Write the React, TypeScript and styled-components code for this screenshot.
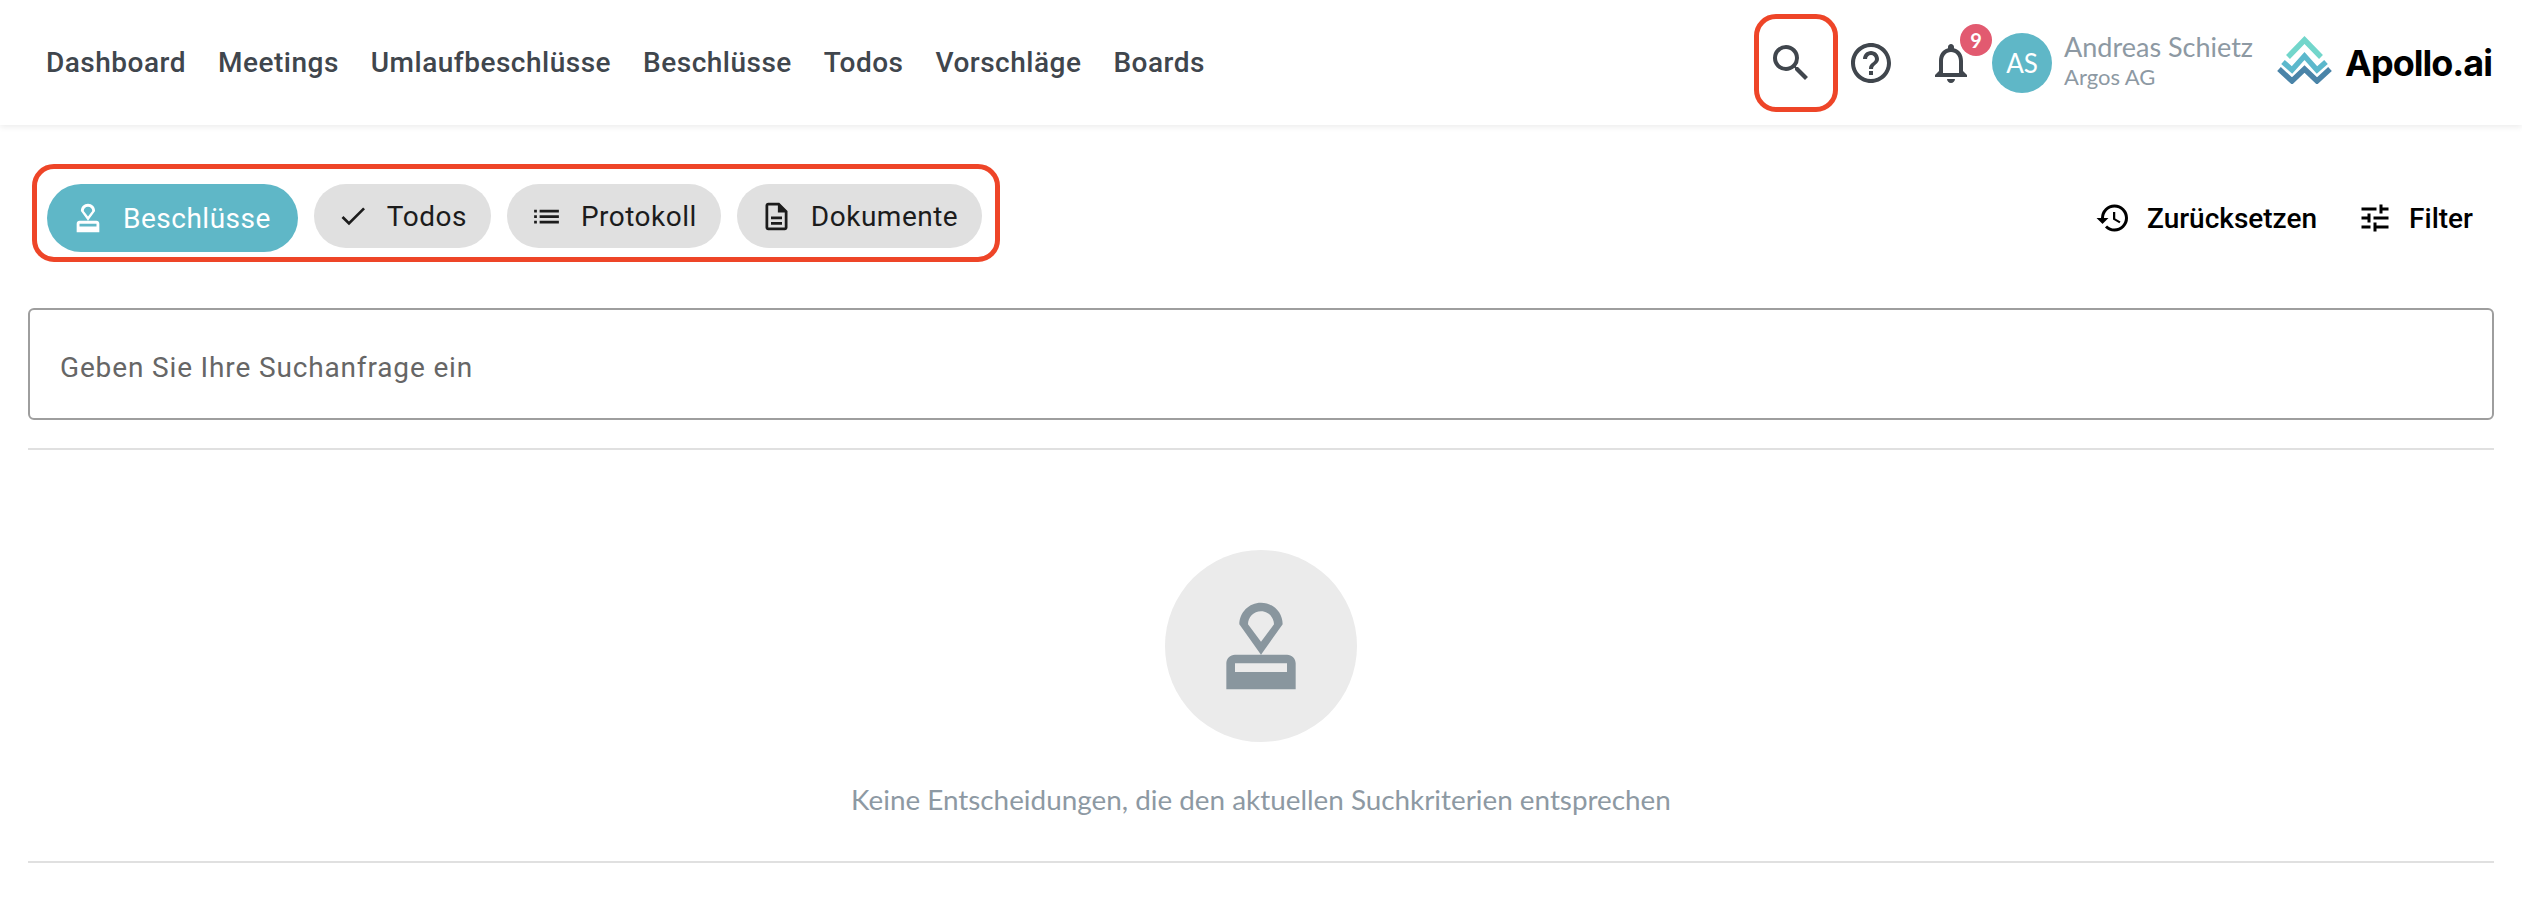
import styled, { createGlobalStyle } from "styled-components";
import {
    MdCheck,
    MdHelpOutline,
    MdHistory,
    MdList,
    MdNotificationsNone,
    MdOutlineDescription,
    MdSearch,
    MdTune,
} from "react-icons/md";

const NAV_ITEMS = ["Dashboard", "Meetings", "Umlaufbeschlüsse", "Beschlüsse", "Todos", "Vorschläge", "Boards"];

const StampIcon = ({ size }: { size: number }) => (
    <svg width={size} height={size} viewBox="0 0 24 24" fill="currentColor">
        <path d="M4 16v6h16v-6c0-1.1-.9-2-2-2H6c-1.1 0-2 .9-2 2zm14 2H6v-2h12v2zM12 2C9.24 2 7 4.24 7 7l5 7 5-7c0-2.76-2.24-5-5-5zm0 9L9 7c0-1.66 1.34-3 3-3s3 1.34 3 3l-3 4z" />
    </svg>
);

const LogoMark = () => (
    <LogoSvg width="56" height="48" viewBox="0 0 56 48" fill="none" strokeWidth="5.4">
        <path d="M11 21 L27.5 4 L44 21" stroke="#72d6cb" />
        <path d="M6 26 L15 34 L27.5 20 L40 34 L49 26" stroke="#5cb8cc" />
        <path d="M2 33 L15 45 L27.5 33 L40 45 L53 33" stroke="#4a84a8" />
    </LogoSvg>
);

const App: React.FC = () => {
    return (
        <Page>
            <GlobalStyle />
            <Header>
                <NavList>
                    {NAV_ITEMS.map((item) => (
                        <NavLink key={item}>{item}</NavLink>
                    ))}
                </NavList>
                <HeaderRight>
                    <SearchMark>
                        <MdSearch size={48} />
                    </SearchMark>
                    <HelpButton>
                        <MdHelpOutline size={48} />
                    </HelpButton>
                    <BellButton>
                        <MdNotificationsNone size={48} />
                        <Badge>9</Badge>
                    </BellButton>
                    <Avatar>AS</Avatar>
                    <UserInfo>
                        <UserName>Andreas Schietz</UserName>
                        <UserCompany>Argos AG</UserCompany>
                    </UserInfo>
                    <Logo>
                        <LogoMark />
                        <LogoText>Apollo.ai</LogoText>
                    </Logo>
                </HeaderRight>
            </Header>
            <Content>
                <Toolbar>
                    <ChipGroup>
                        <Chip $active>
                            <StampIcon size={34} />
                            Beschlüsse
                        </Chip>
                        <Chip>
                            <MdCheck size={32} />
                            Todos
                        </Chip>
                        <Chip>
                            <MdList size={33} />
                            Protokoll
                        </Chip>
                        <Chip>
                            <MdOutlineDescription size={33} />
                            Dokumente
                        </Chip>
                    </ChipGroup>
                    <ToolbarActions>
                        <ActionButton>
                            <MdHistory size={36} />
                            Zurücksetzen
                        </ActionButton>
                        <ActionButton>
                            <MdTune size={36} />
                            Filter
                        </ActionButton>
                    </ToolbarActions>
                </Toolbar>
                <SearchBox>
                    <SearchPlaceholder>Geben Sie Ihre Suchanfrage ein</SearchPlaceholder>
                </SearchBox>
                <EmptyState>
                    <EmptyCircle>
                        <StampIcon size={104} />
                    </EmptyCircle>
                    <EmptyText>Keine Entscheidungen, die den aktuellen Suchkriterien entsprechen</EmptyText>
                </EmptyState>
            </Content>
        </Page>
    );
};

// Styled Components

const GlobalStyle = createGlobalStyle`
    html, body {
        margin: 0;
        padding: 0;
        background: #fff;
    }
    * {
        box-sizing: border-box;
    }
`;

const Page = styled.div`
    width: 2522px;
    height: 906px;
    overflow: hidden;
    font-family: Roboto, sans-serif;
    background: #fff;
`;

const Header = styled.header`
    display: flex;
    justify-content: space-between;
    align-items: center;
    height: 125px;
    padding: 0 30px 0 46px;
    background: #fff;
    box-shadow: 0 2px 6px rgba(0, 0, 0, 0.08);
`;

const NavList = styled.nav`
    display: flex;
    gap: 32px;
`;

const NavLink = styled.a`
    font-size: 28px;
    font-weight: 500;
    letter-spacing: 0.5px;
    color: #40464d;
`;

const HeaderRight = styled.div`
    display: flex;
    align-items: center;
`;

const SearchMark = styled.div`
    display: flex;
    justify-content: center;
    align-items: center;
    width: 84px;
    height: 98px;
    padding-right: 10px;
    border: 5px solid #ee4528;
    border-radius: 22px;
    color: #40464d;
`;

const HelpButton = styled.div`
    display: flex;
    margin-left: 9px;
    color: #40464d;
`;

const BellButton = styled.div`
    position: relative;
    display: flex;
    margin-left: 32px;
    color: #40464d;
`;

const Badge = styled.span`
    position: absolute;
    top: -15px;
    left: 33px;
    display: flex;
    justify-content: center;
    align-items: center;
    width: 32px;
    height: 32px;
    border-radius: 50%;
    background: #e25a70;
    color: #fff;
    font-family: Lato, sans-serif;
    font-size: 20px;
    font-weight: 700;
`;

const Avatar = styled.div`
    display: flex;
    justify-content: center;
    align-items: center;
    width: 60px;
    height: 60px;
    margin-left: 17px;
    border-radius: 50%;
    background: #5fb7c7;
    color: #fff;
    font-family: Lato, sans-serif;
    font-size: 26px;
`;

const UserInfo = styled.div`
    display: flex;
    flex-direction: column;
    margin: -3px 0 0 12px;
    font-family: Lato, sans-serif;
    color: #8d99a3;
`;

const UserName = styled.div`
    font-size: 27px;
    line-height: 32px;
`;

const UserCompany = styled.div`
    font-size: 22px;
    line-height: 28px;
`;

const Logo = styled.div`
    display: flex;
    align-items: center;
    gap: 12px;
    margin-left: 24px;
`;

const LogoSvg = styled.svg`
    margin-bottom: 6px;
`;

const LogoText = styled.span`
    font-family: Inter, sans-serif;
    font-size: 36px;
    font-weight: 700;
    letter-spacing: -1px;
    color: #000;
`;

const Content = styled.main`
    padding: 0 28px;
`;

const Toolbar = styled.div`
    display: flex;
    justify-content: space-between;
    align-items: center;
    padding: 39px 0 46px 4px;
`;

const ChipGroup = styled.div`
    display: flex;
    align-items: flex-start;
    gap: 16px;
    height: 98px;
    padding: 15px 13px 15px 10px;
    border: 5px solid #ee4528;
    border-radius: 22px;
`;

const Chip = styled.div<{ $active?: boolean }>`
    display: flex;
    align-items: center;
    gap: 18px;
    height: ${(p) => (p.$active ? "68px" : "64px")};
    padding: 0 ${(p) => (p.$active ? "27px" : "24px")} 0 ${(p) => (p.$active ? "24px" : "23px")};
    border-radius: 34px;
    background: ${(p) => (p.$active ? "#5fb7c7" : "#e0e0e0")};
    color: ${(p) => (p.$active ? "#fff" : "#1c1c1c")};
    font-size: 28px;
    letter-spacing: 0.5px;
`;

const ToolbarActions = styled.div`
    display: flex;
    gap: 40px;
    margin-top: 10px;
    padding-right: 21px;
`;

const ActionButton = styled.div`
    display: flex;
    align-items: center;
    gap: 16px;
    font-size: 28px;
    font-weight: 500;
    color: #000;
`;

const SearchBox = styled.div`
    display: flex;
    align-items: center;
    height: 112px;
    padding: 6px 30px 0;
    border: 2px solid #9e9e9e;
    border-radius: 6px;
`;

const SearchPlaceholder = styled.span`
    font-size: 28px;
    letter-spacing: 0.85px;
    color: #666;
`;

const EmptyState = styled.div`
    display: flex;
    flex-direction: column;
    align-items: center;
    height: 415px;
    margin-top: 28px;
    padding-top: 100px;
    border-top: 2px solid #e0e0e0;
    border-bottom: 2px solid #e0e0e0;
`;

const EmptyCircle = styled.div`
    display: flex;
    justify-content: center;
    align-items: center;
    width: 192px;
    height: 192px;
    border-radius: 50%;
    background: #ebebeb;
    color: #89969e;
`;

const EmptyText = styled.div`
    margin-top: 41px;
    font-family: Lato, sans-serif;
    font-size: 27.85px;
    color: #8d99a3;
`;

export default App;
